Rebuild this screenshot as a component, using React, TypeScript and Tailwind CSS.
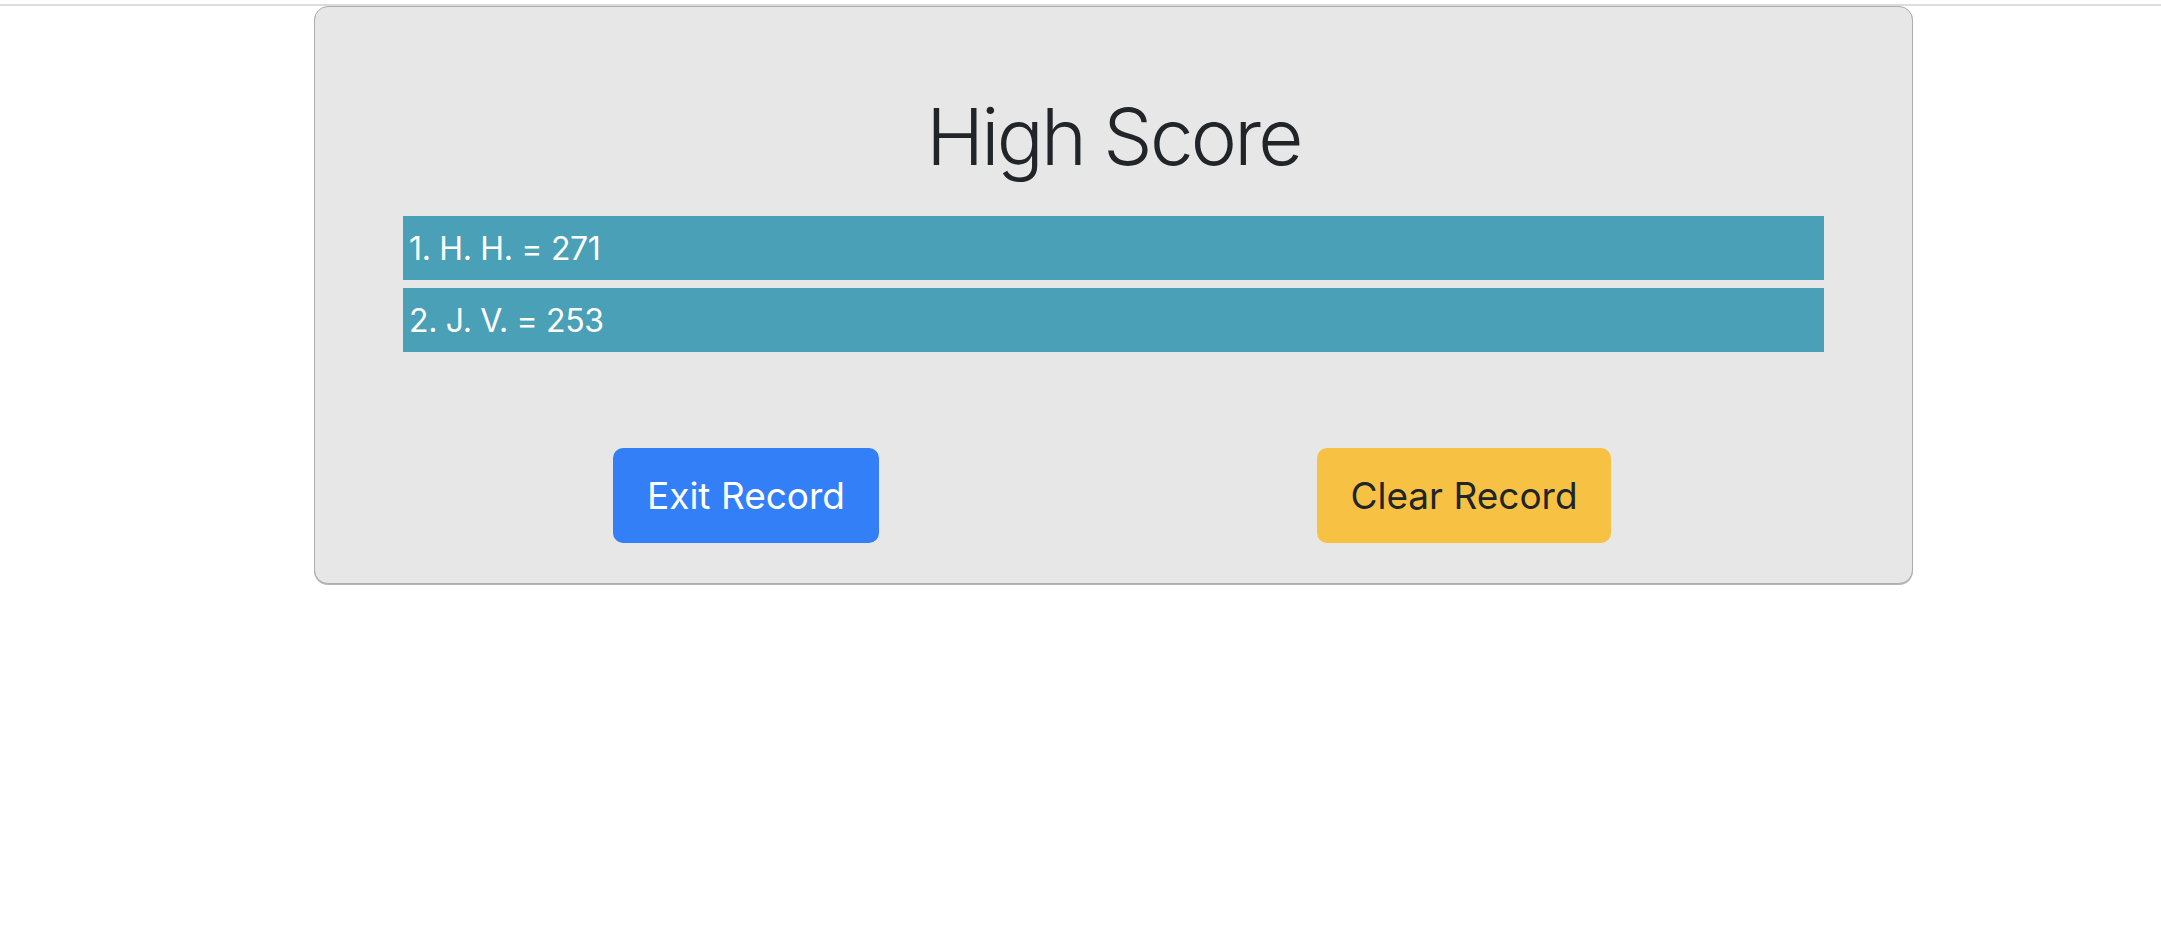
import React from "react";

const scores = ["1. H. H. = 271", "2. J. V. = 253"];

export default function App() {
  return (
    <div className="min-h-[930px] w-full bg-white" style={{ fontFamily: "Inter, 'Noto Sans', sans-serif" }}>
      <div className="h-[4px]" />
      <div className="h-[2px] w-full bg-[#dcdcdc]" />
      <div className="ml-[314px] w-[1599px] rounded-[14px] border border-[#adadad] bg-[#e7e7e7] shadow-[0_1px_0_#b5b5b5]">
        <div className="pt-[83px] text-center text-[78px] font-light leading-[94px] tracking-[-0.035em] text-[#212529]">
          High Score
        </div>
        <div className="mx-[88px] mt-[32px] flex flex-col gap-[8px]">
          {scores.map((s) => (
            <div
              key={s}
              className="h-[64px] bg-[#4aa0b6] pl-[6px] pt-[9px] text-[32px] leading-[48px] tracking-[-0.01em] text-white"
            >
              {s}
            </div>
          ))}
        </div>
        <div className="mx-[88px] mt-[96px] mb-[40px] flex pl-[210px] gap-[438px]">
          <button className="flex h-[95px] w-[266px] items-center justify-center rounded-[10px] bg-[#337ff7] text-[37px] text-white">
            Exit Record
          </button>
          <button className="flex h-[95px] w-[294px] items-center justify-center rounded-[10px] bg-[#f7c244] text-[37px] text-[#212529]">
            Clear Record
          </button>
        </div>
      </div>
    </div>
  );
}
